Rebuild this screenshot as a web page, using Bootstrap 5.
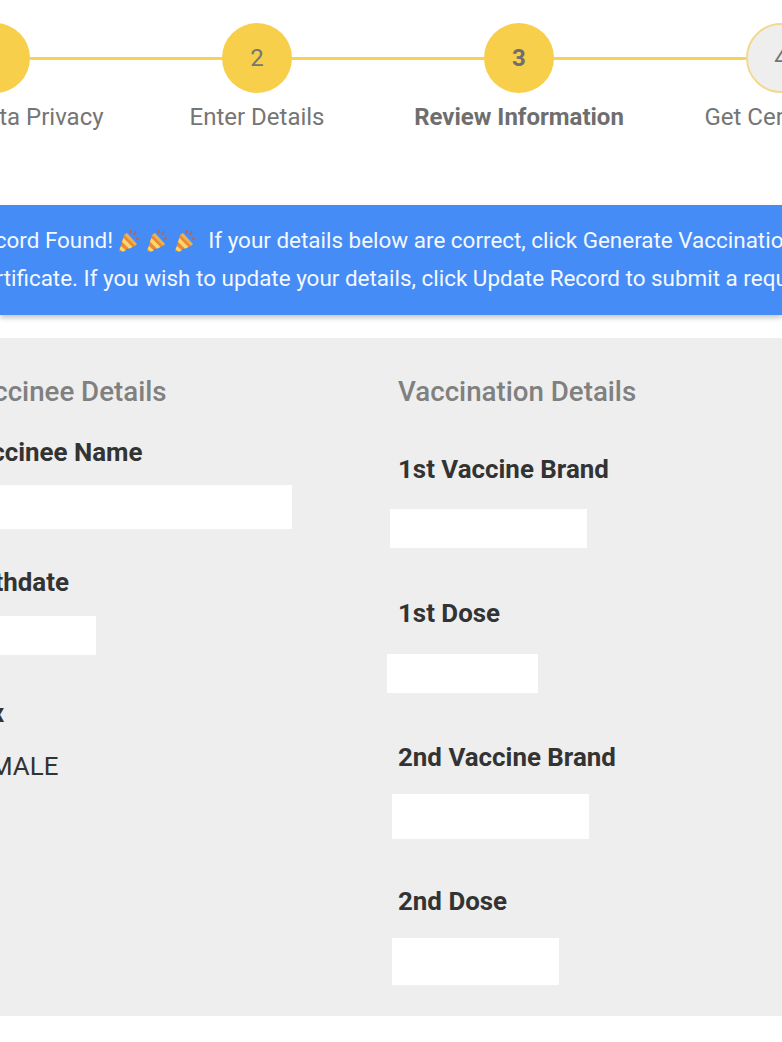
<!DOCTYPE html>
<html lang="en">
<head>
    <meta charset="UTF-8">
    <meta name="viewport" content="width=device-width, initial-scale=1.0">
    <title>Review Information</title>
    <link href="https://cdn.jsdelivr.net/npm/bootstrap@5.3.0/dist/css/bootstrap.min.css" rel="stylesheet">
    <style>
        html, body { height: 100%; overflow: hidden; }
        body { font-family: Roboto, "Liberation Sans", sans-serif; background: #fff; color: #333; }
        .stepper { width: 1048px; margin-left: -136px; padding-top: 23px; }
        .step { width: 262px; color: #757575; font-size: 24px; }
        .step-head { height: 70px; }
        .step-line { flex: 1 1 0; height: 3px; background: #f7d254; }
        .step-line-none { background: transparent; }
        .step-dot { width: 70px; height: 70px; background: #f7cf4b; font-size: 24px; flex: none; }
        .step-dot-todo { background: #eee; border: 2px solid #f3d98f; }
        .step-label { margin-top: 9px; line-height: 30px; white-space: nowrap; }
        .step-label-first { margin-left: 84px; }
        .step-active { font-weight: 700; color: #6e6e6e; }
        .notice { margin-top: 73px; height: 110px; background: #458cf6; color: #f4f8ff; font-size: 22.45px; line-height: 38px; padding-top: 16px; box-shadow: 0 3px 5px rgba(0,0,0,.22); white-space: nowrap; }
        .notice-text { margin-left: -31px; }
        .party { width: 20px; height: 24px; vertical-align: -5px; margin-right: 8px; }
        .panel { margin-top: 23px; height: 678px; background: #eee; padding-top: 38px; }
        .col-left { width: 437px; flex: none; margin-left: -39px; }
        .col-right { flex: 1 1 0; }
        .panel-title { font-size: 27.7px; font-weight: 500; color: #808080; line-height: 32px; margin: 0; white-space: nowrap; }
        .field-label { font-size: 25.9px; font-weight: 700; color: #333; line-height: 32px; margin: 0; white-space: nowrap; }
        .field-value { font-size: 25.9px; line-height: 30px; margin-top: 22px; }
        .redact { background: #fff; }
        .name-label { margin-top: 28px; }
        .name-box { margin-top: 17px; height: 44px; width: 331px; }
        .birth-label { margin-top: 37px; }
        .birth-box { margin-top: 18px; height: 39px; width: 135px; }
        .sex-label { margin-top: 42px; }
        .brand1-label { margin-top: 45px; }
        .brand1-box { margin-top: 24px; margin-left: -8px; height: 39px; width: 197px; }
        .dose1-label { margin-top: 49px; }
        .dose1-box { margin-top: 25px; margin-left: -11px; height: 39px; width: 151px; }
        .brand2-label { margin-top: 48px; }
        .brand2-box { margin-top: 21px; margin-left: -6px; height: 45px; width: 197px; }
        .dose2-label { margin-top: 46px; }
        .dose2-box { margin-top: 21px; margin-left: -6px; height: 47px; width: 167px; }
    </style>
</head>
<body>
    <div class="d-flex stepper text-center">
        <div class="step">
            <div class="d-flex align-items-center step-head"><div class="step-line step-line-none"></div><div class="step-dot rounded-circle d-flex align-items-center justify-content-center">1</div><div class="step-line"></div></div>
            <div class="step-label step-label-first">Data Privacy</div>
        </div>
        <div class="step">
            <div class="d-flex align-items-center step-head"><div class="step-line"></div><div class="step-dot rounded-circle d-flex align-items-center justify-content-center">2</div><div class="step-line"></div></div>
            <div class="step-label">Enter Details</div>
        </div>
        <div class="step step-active">
            <div class="d-flex align-items-center step-head"><div class="step-line"></div><div class="step-dot rounded-circle d-flex align-items-center justify-content-center">3</div><div class="step-line"></div></div>
            <div class="step-label">Review Information</div>
        </div>
        <div class="step">
            <div class="d-flex align-items-center step-head"><div class="step-line"></div><div class="step-dot step-dot-todo rounded-circle d-flex align-items-center justify-content-center">4</div><div class="step-line step-line-none"></div></div>
            <div class="step-label">Get Certificate</div>
        </div>
    </div>

    <div class="notice">
        <div class="notice-text">Record Found!
            <svg class="party" viewBox="0 0 20 24"><path d="M0 23 5 6l11 11z" fill="#e58a35"/><path d="M2 17l5 4.500-3.500 1.200-3-2.500zM4.500 9l9 9-3.500 1.800-7-7z" fill="#fad66e"/><path d="M5 6l11 11 2-2-10-11z" fill="#f2b04d"/><path d="M11 1l1 3M17 2l-2 4M20 9l-3 1" stroke="#a8685f" stroke-width="1.600" fill="none"/></svg><svg class="party" viewBox="0 0 20 24"><path d="M0 23 5 6l11 11z" fill="#e58a35"/><path d="M2 17l5 4.500-3.500 1.200-3-2.500zM4.500 9l9 9-3.500 1.800-7-7z" fill="#fad66e"/><path d="M5 6l11 11 2-2-10-11z" fill="#f2b04d"/><path d="M11 1l1 3M17 2l-2 4M20 9l-3 1" stroke="#a8685f" stroke-width="1.600" fill="none"/></svg><svg class="party" viewBox="0 0 20 24"><path d="M0 23 5 6l11 11z" fill="#e58a35"/><path d="M2 17l5 4.500-3.500 1.200-3-2.500zM4.500 9l9 9-3.500 1.800-7-7z" fill="#fad66e"/><path d="M5 6l11 11 2-2-10-11z" fill="#f2b04d"/><path d="M11 1l1 3M17 2l-2 4M20 9l-3 1" stroke="#a8685f" stroke-width="1.600" fill="none"/></svg>
            If your details below are correct, click Generate Vaccination</div>
        <div class="notice-text">Certificate. If you wish to update your details, click Update Record to submit a request</div>
    </div>

    <div class="panel d-flex">
        <div class="col-left">
            <h5 class="panel-title">Vaccinee Details</h5>
            <p class="field-label name-label">Vaccinee Name</p>
            <div class="redact name-box"></div>
            <p class="field-label birth-label">Birthdate</p>
            <div class="redact birth-box"></div>
            <p class="field-label sex-label">Sex</p>
            <div class="field-value">FEMALE</div>
        </div>
        <div class="col-right">
            <h5 class="panel-title">Vaccination Details</h5>
            <p class="field-label brand1-label">1st Vaccine Brand</p>
            <div class="redact brand1-box"></div>
            <p class="field-label dose1-label">1st Dose</p>
            <div class="redact dose1-box"></div>
            <p class="field-label brand2-label">2nd Vaccine Brand</p>
            <div class="redact brand2-box"></div>
            <p class="field-label dose2-label">2nd Dose</p>
            <div class="redact dose2-box"></div>
        </div>
    </div>
</body>
</html>
